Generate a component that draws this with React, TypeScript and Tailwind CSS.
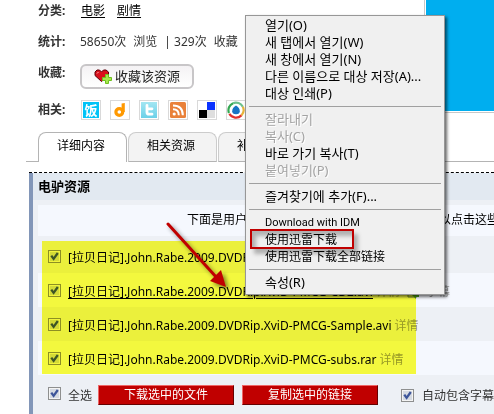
import React, { useState } from "react";

type FileRow = {
  id: string;
  name: string;
  subtitle?: boolean;
};

type MenuItem = {
  label: string;
  disabled?: boolean;
  chinese?: boolean;
  latin?: boolean;
};

const files: FileRow[] = [
  { id: "cd1", name: "[拉贝日记].John.Rabe.2009.DVDRip.XviD-PMCG-CD1.avi" },
  {
    id: "cd2",
    name: "[拉贝日记].John.Rabe.2009.DVDRip.XviD-PMCG-CD2.avi",
    subtitle: true,
  },
  { id: "sample", name: "[拉贝日记].John.Rabe.2009.DVDRip.XviD-PMCG-Sample.avi" },
  { id: "subs", name: "[拉贝日记].John.Rabe.2009.DVDRip.XviD-PMCG-subs.rar" },
];

const menuGroups: MenuItem[][] = [
  [
    { label: "열기(O)" },
    { label: "새 탭에서 열기(W)" },
    { label: "새 창에서 열기(N)" },
    { label: "다른 이름으로 대상 저장(A)..." },
    { label: "대상 인쇄(P)" },
  ],
  [
    { label: "잘라내기", disabled: true },
    { label: "복사(C)", disabled: true },
    { label: "바로 가기 복사(T)" },
    { label: "붙여넣기(P)", disabled: true },
  ],
  [{ label: "즐겨찾기에 추가(F)..." }],
  [
    { label: "Download with IDM", latin: true },
    { label: "使用迅雷下载", chinese: true },
    { label: "使用迅雷下载全部链接", chinese: true },
  ],
  [{ label: "속성(R)" }],
];

function menuFont(item: MenuItem) {
  if (item.latin) return "font-['Roboto',sans-serif] text-[11px]";
  if (item.chinese) return "font-['Noto_Sans','Noto_Sans_CJK_SC',sans-serif] text-xs";
  return "text-[13px]";
}

function Checkbox({ id, label }: { id: string; label?: string }) {
  const [checked, setChecked] = useState(true);

  return (
    <span className="grid size-[13px] shrink-0">
      <input
        id={id}
        type="checkbox"
        aria-label={label}
        checked={checked}
        onChange={(e) => setChecked(e.target.checked)}
        className="col-start-1 row-start-1 size-[13px] appearance-none border border-[#8e8f8f] bg-[#d5dae2] shadow-[inset_0_0_0_1px_#f4f4f4]"
      />
      {checked && (
        <svg
          viewBox="0 0 13 13"
          className="pointer-events-none col-start-1 row-start-1 size-[13px]"
        >
          <path
            d="M3.3 5.6 5.6 8.8 9.8 3"
            fill="none"
            stroke="#3d559a"
            strokeWidth="2.3"
          />
        </svg>
      )}
    </span>
  );
}

function InfoRow({ label, children }: { label: string; children: React.ReactNode }) {
  return (
    <div className="flex items-start">
      <span className="w-[42px] shrink-0 font-bold leading-[22px]">{label}</span>
      {children}
    </div>
  );
}

function ShareLink({ label, children }: { label: string; children: React.ReactNode }) {
  return (
    <a
      href="#"
      aria-label={label}
      className="grid size-5 place-items-center border border-[#d9d9d9] bg-white"
    >
      {children}
    </a>
  );
}

function ShareLinks() {
  return (
    <div className="flex gap-[9px] pl-px pt-px">
      <ShareLink label="饭否">
        <span className="grid size-4 place-items-center bg-[#00c3f7] text-[13px] font-bold leading-4 text-white">
          饭
        </span>
      </ShareLink>
      <ShareLink label="豆瓣">
        <svg viewBox="0 0 18 18" className="size-[18px]">
          <circle cx="8.3" cy="11" r="3.4" fill="none" stroke="#f90" strokeWidth="3.2" />
          <path d="M10.6 2.6 13.8 2v9h-3.2z" fill="#f90" />
        </svg>
      </ShareLink>
      <ShareLink label="Twitter">
        <svg viewBox="0 0 18 18" className="size-[18px]">
          <defs>
            <linearGradient id="sky" x2="0" y2="1">
              <stop stopColor="#a3e6f2" />
              <stop offset="1" stopColor="#6bd0e8" />
            </linearGradient>
          </defs>
          <path d="M1 1h16v16H1z" fill="url(#sky)" />
          <path
            d="M7 4.5v6.7q0 2 2 2h3M7 7.8h5"
            fill="none"
            stroke="#fff"
            strokeWidth="2.8"
            strokeLinecap="round"
          />
        </svg>
      </ShareLink>
      <ShareLink label="RSS">
        <svg viewBox="0 0 18 18" className="size-[18px]">
          <rect x="1" y="1" width="16" height="16" rx="1.5" fill="#e9813a" />
          <circle cx="5.2" cy="13" r="1.6" fill="#fff" />
          <path
            d="M4 8.2q5.8 0 5.8 6M4 4.4q9.8 0 9.8 9.8"
            fill="none"
            stroke="#fff"
            strokeWidth="2"
          />
        </svg>
      </ShareLink>
      <ShareLink label="Delicious">
        <svg viewBox="0 0 18 18" className="size-[18px]">
          <path d="M9 1h8v8H9z" fill="#0a32ff" />
          <path d="M1 9h8v8H1z" fill="#000" />
          <path d="M9 9h8v8H9z" fill="#dedede" />
        </svg>
      </ShareLink>
      <ShareLink label="QQ">
        <svg viewBox="0 0 18 18" className="size-[18px]">
          <g fill="none" strokeWidth="2.2">
            <path d="M2 12A7.6 7.6 0 0 1 6 2.2" stroke="#35a853" />
            <path d="M6 2.2a7.6 7.6 0 0 1 9.8 3.6" stroke="#6cc08b" />
            <path d="M15.8 5.8a7.6 7.6 0 0 1-1.4 8.6" stroke="#e8b43a" />
            <path d="M14.4 14.4A7.6 7.6 0 0 1 2.4 12.8" stroke="#e0302c" />
          </g>
          <path
            d="M9 4.6q3.8 2.2 3.8 5.6 0 3-3.8 3t-3.8-3Q5.200 6.800 9 4.600z"
            fill="#1673c4"
          />
        </svg>
      </ShareLink>
    </div>
  );
}

function FileList() {
  return (
    <div className="relative mt-[3px]">
      <ul>
        {files.map((file) => (
          <li
            key={file.id}
            className="flex h-[34px] items-center pl-2.5 even:bg-[#f5f8fe]"
          >
            <Checkbox id={file.id} label={file.name} />
            <div className="flex items-center gap-[3px] pl-[7px] pt-1">
              <a
                href="#"
                className={
                  file.subtitle ? "text-black underline underline-offset-2" : "text-black"
                }
              >
                {file.name}
              </a>
              <a href="#" className="text-[#999]">
                详情
              </a>
              {file.subtitle && (
                <a href="#" className="flex items-center gap-1.5 pl-1 text-[#999]">
                  <svg viewBox="0 0 13 13" className="size-[13px]">
                    <path d="M1 2h9v9H1z" fill="#d9e7c3" stroke="#789" />
                    <path d="m5 9 4-4v2h3v4H9v2z" fill="#4a9d1c" />
                  </svg>
                  字幕
                </a>
              )}
            </div>
          </li>
        ))}
      </ul>
      {/* marker pen over the file names */}
      <div className="pointer-events-none absolute bottom-px left-1 top-0.5 w-[374px] bg-[#fdff3e] mix-blend-multiply" />
    </div>
  );
}

function ContextMenu() {
  return (
    <div
      role="menu"
      className="absolute left-[245px] top-[15px] w-[200px] border border-[#979797] bg-[#f0f0f0] px-[3px] pb-[3px] pt-px font-['Noto_Sans','Noto_Sans_CJK_KR',sans-serif] text-black shadow-[2px_2px_3px_#0009]"
    >
      {menuGroups.map((group, i) => (
        <div key={i} className={i > 0 ? "mt-1 border-t border-[#a0a0a0] pt-1" : ""}>
          {group.map((item) => (
            <button
              key={item.label}
              type="button"
              role="menuitem"
              disabled={item.disabled}
              className={`block h-[17px] w-full pl-4 text-left leading-[17px] disabled:text-[#a3a3a3] disabled:[text-shadow:1px_1px_#fff] ${menuFont(
                item
              )}`}
            >
              {item.label}
            </button>
          ))}
        </div>
      ))}
    </div>
  );
}

export default function App() {
  return (
    <div className="relative flex min-h-screen flex-col overflow-hidden whitespace-nowrap bg-white font-['Noto_Sans','Noto_Sans_CJK_SC',sans-serif] text-xs text-[#333]">
      <div className="flex justify-between">
        <div className="flex flex-col gap-[9px] pl-[38px]">
          <InfoRow label="分类:">
            <div className="flex gap-3 pl-px leading-[22px] text-black">
              <a href="#" className="underline underline-offset-2">
                电影
              </a>
              <a href="#" className="underline underline-offset-2">
                剧情
              </a>
            </div>
          </InfoRow>
          <InfoRow label="统计:">
            <div className="flex gap-[7px] leading-[22px]">
              <span>58650次</span>
              <span>浏览</span>
              <span>| 329次</span>
              <span>收藏</span>
            </div>
          </InfoRow>
          <InfoRow label="收藏:">
            <div className="h-7 pt-0.5">
              <button
                type="button"
                className="flex h-[25px] w-[114px] items-center gap-[3px] rounded-md border-2 border-[#c8c6c8] bg-linear-to-b from-[#f4f2f4] to-white pl-3 text-[13px] text-[#222]"
              >
                <svg viewBox="0 0 18 15" className="h-[15px] w-[18px]">
                  <path
                    d="M7.5 12.5 1 6.5V3l2-2h2.5l2 2 2-2H12l2.5 2v3.5z"
                    fill="#d9101c"
                    stroke="#5c0008"
                  />
                  <path d="M3 4.5 4.5 3" stroke="#fbb" />
                  <path
                    d="M11.5 5.5h3v3h3v3h-3v3h-3v-3h-3v-3h3z"
                    fill="#a6e84e"
                    stroke="#6fbf1f"
                  />
                </svg>
                收藏该资源
              </button>
            </div>
          </InfoRow>
          <InfoRow label="相关:">
            <ShareLinks />
          </InfoRow>
        </div>
        <div className="h-[113px] w-[70px] border-b border-l border-[#c8c8c8] pb-px pl-px">
          <div className="h-full bg-[#00aeef]" />
        </div>
      </div>

      <nav className="ml-[26px] mt-[11px] flex h-[30px] text-black">
        <div className="w-3 border-b border-[#b4b4b4]" />
        <a
          href="#"
          className="w-[89px] rounded-t-lg border border-b-0 border-[#b4b4b4] bg-white pl-[18px] leading-[26px]"
        >
          详细内容
        </a>
        <a
          href="#"
          className="ml-px w-[89px] rounded-t-lg border border-[#ccc] border-b-[#b4b4b4] bg-[#f3f3f3] pl-[18px] leading-[26px]"
        >
          相关资源
        </a>
        <a
          href="#"
          className="ml-px w-[89px] rounded-t-lg border border-[#ccc] border-b-[#b4b4b4] bg-[#f3f3f3] pl-[18px] leading-[26px]"
        >
          补充资源
        </a>
        <div className="flex-1 border-b border-[#b4b4b4]" />
      </nav>

      <section className="ml-[29px] mt-2.5 flex flex-1 flex-col border-t border-dashed border-black">
        <div className="flex-1 border-l-4 border-[#8296b8] bg-[#edf0f5]">
          <h2 className="h-[27px] bg-[#e2e9f1] pl-[5px] text-[13px] font-bold leading-[26px] text-black">
            电驴资源
          </h2>
          <div className="pl-[5px] pt-[5px]">
            <p className="h-[31px] bg-[#f5f8fe] pl-[149px] leading-[30px] text-black">
              下面是用户共享的文件列表，安装电驴后，您可以点击这些文件名进行下载
            </p>
            <FileList />
            <div className="flex h-[37px] items-center pl-2.5">
              <Checkbox id="all" />
              <label htmlFor="all" className="pl-[7px] pt-1">
                全选
              </label>
              <button
                type="button"
                className="ml-1.5 mt-0.5 h-5 w-[136px] border border-b-[#600] border-l-[#e66] border-r-[#600] border-t-[#e66] bg-[#c00000] leading-[18px] text-white"
              >
                下载选中的文件
              </button>
              <button
                type="button"
                className="ml-2 mt-0.5 h-5 w-[136px] border border-b-[#600] border-l-[#e66] border-r-[#600] border-t-[#e66] bg-[#c00000] leading-[18px] text-white"
              >
                复制选中的链接
              </button>
              <div className="flex items-center gap-2 pl-[23px] pt-1">
                <Checkbox id="subtitle" />
                <label htmlFor="subtitle">自动包含字幕</label>
              </div>
            </div>
          </div>
        </div>
      </section>

      <ContextMenu />
      <div className="pointer-events-none absolute left-[250px] top-[229px] h-5 w-[104px] border-2 border-[#c00000] shadow-[4px_5px_4px_#0004,inset_4px_5px_4px_#0004]" />
      <svg
        viewBox="0 0 70 75"
        className="pointer-events-none absolute left-[165px] top-[220px] h-[75px] w-[70px] drop-shadow-[3px_3px_2px_#0007]"
      >
        <path d="M3 4 52 58" stroke="#c00000" strokeWidth="3" strokeLinecap="round" />
        <path d="m61 67-16-6 11-11z" fill="#c00000" />
      </svg>
    </div>
  );
}
